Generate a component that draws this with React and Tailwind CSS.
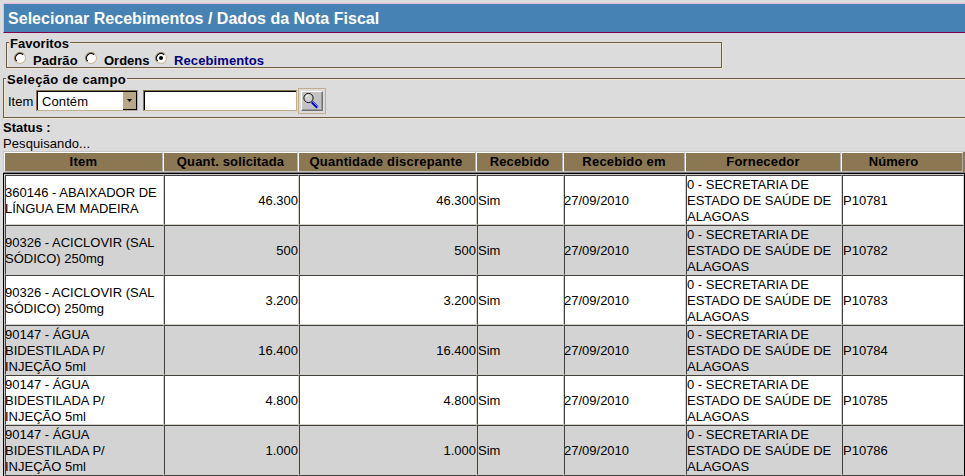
import React from "react";

const columns = [
  { label: "Item", style: "tracking-[0.3px]" },
  { label: "Quant. solicitada", style: "tracking-[0.15px]" },
  { label: "Quantidade discrepante", style: "tracking-[0.22px] pr-[2px]" },
  { label: "Recebido", style: "tracking-[0.15px]" },
  { label: "Recebido em", style: "tracking-[0.22px]" },
  { label: "Fornecedor", style: "tracking-[0.2px]" },
  { label: "Número", style: "tracking-[0.1px] pr-[17px]" },
];

const agua = ["90147 - ÁGUA", "BIDESTILADA P/", "INJEÇÃO 5ml"];
const aciclovir = ["90326 - ACICLOVIR (SAL", "SÓDICO) 250mg"];

const rows = [
  { item: ["360146 - ABAIXADOR DE", "LÍNGUA EM MADEIRA"], qty: "46.300", num: "P10781" },
  { item: aciclovir, qty: "500", num: "P10782" },
  { item: aciclovir, qty: "3.200", num: "P10783" },
  { item: agua, qty: "16.400", num: "P10784" },
  { item: agua, qty: "4.800", num: "P10785" },
  { item: agua, qty: "1.000", num: "P10786" },
];

const supplier = ["0 - SECRETARIA DE", "ESTADO DE SAÚDE DE", "ALAGOAS"];

function Lines({ lines }) {
  return (
    <div>
      {lines.map((line) => (
        <div key={line} className="whitespace-nowrap">{line}</div>
      ))}
    </div>
  );
}

function Cell({ children, right }) {
  return (
    <div
      className={
        "flex h-[50px] items-center border border-t-[#404040] border-l-[#404040] border-r-[#d4d0c8] border-b-[#d4d0c8] pt-[2px] " +
        (right ? "justify-end" : "")
      }
    >
      {children}
    </div>
  );
}

function Radio({ checked }) {
  return (
    <svg width="12" height="12" viewBox="0 0 12 12" className="mt-[3px] shrink-0">
      <circle cx="6" cy="6" r="5" fill="#fff" />
      <path d="M2.1 9.9A5.4 5.4 0 0 1 9.9 2.1" fill="none" stroke="#8b7550" strokeWidth="1" />
      <path d="M2.8 9.2A4.5 4.5 0 0 1 9.2 2.8" fill="none" stroke="#000" strokeWidth="1.1" />
      <path d="M9.9 2.1A5.4 5.4 0 0 1 2.1 9.9" fill="none" stroke="#c8b896" strokeWidth="1" />
      {checked && <circle cx="6" cy="6" r="2" fill="#000" />}
    </svg>
  );
}

function Magnifier() {
  return (
    <svg width="18" height="18" viewBox="0 0 18 18">
      <path d="M10 10L15.5 15.5" stroke="#0000e0" strokeWidth="3" />
      <path d="M10.5 9.5L16 15" stroke="#8fa0ff" strokeWidth="0.9" />
      <circle cx="6.5" cy="6" r="4.6" fill="#d0d0d0" stroke="#111" strokeWidth="1" />
      <path d="M4 6A2.6 2.6 0 0 1 6.5 3.4" fill="none" stroke="#fff" strokeWidth="1" />
    </svg>
  );
}

const groove =
  "min-w-0 border border-[#6b5c4a] shadow-[1px_1px_0_#f0e6d2,inset_1px_1px_0_#f0e6d2]";

export default function App() {
  return (
    <div className="h-[476px] w-[965px] overflow-hidden bg-[#dcdcdc] pt-[3px] pl-[3px] font-['Liberation_Sans',Arial,sans-serif] text-[13px] leading-4 text-black">
      <header className="flex h-[30px] items-center border-t border-b border-l border-t-[#e6b8dc] border-b-[#800050] border-l-[#e6b8dc] bg-[#4682b4] pt-[2px] pl-1">
        <h1 className="text-[16px] font-bold tracking-[0.03px] whitespace-nowrap text-white">
          Selecionar Recebimentos / Dados da Nota Fiscal
        </h1>
      </header>

      <fieldset className={"mt-[2px] ml-[3px] h-[33px] w-[716px] " + groove}>
        <legend className="ml-[2px] h-[14px] bg-[#dcdcdc] px-px leading-[17px] font-bold tracking-[0.05px]">
          Favoritos
        </legend>
        <div className="flex items-start pl-[7px] font-bold">
          <Radio />
          <span className="mt-[4px] ml-[7px] w-[45px] tracking-[0.1px]">Padrão</span>
          <span className="ml-[7px] flex"><Radio /></span>
          <span className="mt-[4px] ml-[7px] w-[45px]">Ordens</span>
          <span className="ml-[6px] flex"><Radio checked /></span>
          <span className="mt-[4px] ml-[7px] tracking-[0.1px] text-[#000080]">Recebimentos</span>
        </div>
      </fieldset>

      <fieldset className={"mt-[3px] h-[47px] w-[970px] " + groove}>
        <legend className="ml-[2px] h-[14px] bg-[#dcdcdc] px-px leading-[17px] font-bold tracking-[0.35px]">
          Seleção de campo
        </legend>
        <div className="flex items-start pl-1">
          <span className="mt-[9px] w-[28px]">Item</span>
          <div className="mt-[5px] flex h-[21px] w-[102px] border border-t-[#8b7550] border-l-[#8b7550] border-r-[#bfae8c] border-b-[#bfae8c]">
            <div className="flex flex-1 items-center border-t border-l border-black bg-white pt-[2px] pl-1">
              <span className="tracking-[0.1px]">Contém</span>
            </div>
            <div className="flex w-[14px] items-center justify-center border-r border-b border-t border-t-black border-r-black border-b-black bg-[#b8a888]">
              <svg width="5" height="3" viewBox="0 0 5 3"><path d="M0 0H5L2.5 3Z" fill="#000" /></svg>
            </div>
          </div>
          <div className="mt-[5px] ml-[5px] h-[21px] w-[154px] border border-t-[#8b7550] border-l-[#8b7550] border-r-[#bfae8c] border-b-[#bfae8c]">
            <div className="h-full border-t border-l border-black bg-white" />
          </div>
          <div className="mt-[3px] ml-px h-[26px] w-[28px] border border-[#bfae8c] p-[2px]">
            <button className="block h-[20px] w-[22px] border border-t-white border-r-[#707070] border-b-[#707070] border-l-white bg-[#c3c3c3] shadow-[inset_-1px_-1px_0_#999]">
              <Magnifier />
            </button>
          </div>
        </div>
      </fieldset>

      <div className="h-[18px] pt-[2px] font-bold">Status :</div>
      <div className="h-[15px] tracking-[0.08px]">Pesquisando...</div>

      <div className="grid h-[22px] grid-cols-[159px_135px_178px_87px_122px_156px_122px_2px] border-t border-b border-l border-[#c8c8c8] border-b-[#808080]">
        {columns.map((c) => (
          <div
            key={c.label}
            className={
              "flex h-[20px] items-center justify-center border border-t-white border-r-[#b0b0b0] border-b-[#c0c0c0] border-l-white bg-[#8b7752] font-bold whitespace-nowrap " +
              c.style
            }
          >
            {c.label}
          </div>
        ))}
        <div className="h-[20px] bg-[#8b7752]" />
      </div>

      <div className="w-[962px] border border-black bg-[#c8c8c8] pt-px pl-px">
        {rows.map((r, i) => (
          <div
            key={r.num}
            className={
              "grid grid-cols-[159px_135px_178px_87px_122px_156px_122px] " +
              (i % 2 ? "bg-[#d3d3d3]" : "bg-white")
            }
          >
            <Cell><div className="-ml-px"><Lines lines={r.item} /></div></Cell>
            <Cell right>{r.qty}</Cell>
            <Cell right>{r.qty}</Cell>
            <Cell>Sim</Cell>
            <Cell><span className="-ml-px">27/09/2010</span></Cell>
            <Cell><Lines lines={supplier} /></Cell>
            <Cell>{r.num}</Cell>
          </div>
        ))}
        <div className="grid grid-cols-[159px_135px_178px_87px_122px_156px_122px] bg-white">
          {columns.map((c) => (
            <Cell key={c.label} />
          ))}
        </div>
      </div>
    </div>
  );
}
